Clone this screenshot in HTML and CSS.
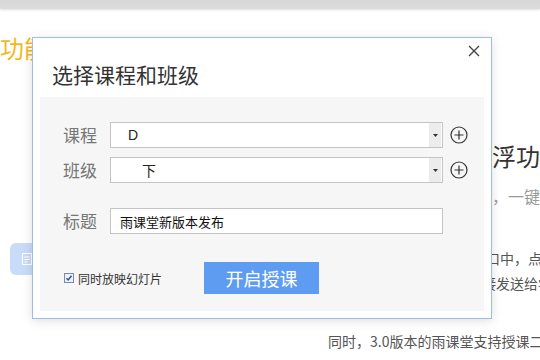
FILE: index.html
```html
<!DOCTYPE html>
<html lang="zh-CN">
<head>
<meta charset="utf-8">
<title>选择课程和班级</title>
<link rel="stylesheet" href="styles.css">
</head>
<body>
<div class="screen">
  <div class="topbar"></div>
  <div class="bg">
    <div class="bg-left">
      <h2 class="feature-title">新功能体验</h2>
      <div class="bg-btn">
        <svg width="10" height="12" viewBox="0 0 10 12"><rect x="0.5" y="0.5" width="9" height="11" fill="none" stroke="#fff" stroke-width="1"/><path d="M2.5 4h5M2.5 6.5h5M2.5 9h3" stroke="#fff" stroke-width="1"/></svg>
      </div>
    </div>
    <div class="bg-right">
      <h2 class="bg-heading">雨课堂全新推出悬浮功能</h2>
      <p class="bg-sub">不再需要来回切换课件窗口，一键开启授课</p>
      <p class="bg-para"><span class="bg-line bg-line-first">老师只要在雨课堂插件悬浮窗口中，点击开启授课</span><span class="bg-line">课程二维码和幻灯片都将会直接发送给学生</span></p>
      <p class="bg-para bg-para-indent">同时，3.0版本的雨课堂支持授课二维码</p>
    </div>
  </div>

  <div class="dialog">
    <div class="dlg-head">
      <h3 class="dlg-title">选择课程和班级</h3>
      <button class="dlg-close" type="button" aria-label="关闭">
        <svg width="12" height="12" viewBox="0 0 12 12"><path d="M1 1L11 11M11 1L1 11" stroke="#444" stroke-width="1.4" fill="none"/></svg>
      </button>
    </div>
    <div class="dlg-panel">
      <div class="row">
        <span class="row-label">课程</span>
        <div class="select">
          <span class="select-val">D</span>
          <span class="select-arrow"><svg width="5" height="3" viewBox="0 0 5 3"><path d="M0 0H5L2.5 3Z" fill="#333"/></svg></span>
        </div>
        <span class="add"><svg width="18" height="18" viewBox="0 0 18 18"><circle cx="9" cy="9" r="8" fill="none" stroke="#333" stroke-width="1.2"/><path d="M4.5 9H13.5M9 4.5V13.5" stroke="#333" stroke-width="1.2"/></svg></span>
      </div>
      <div class="row">
        <span class="row-label">班级</span>
        <div class="select">
          <span class="select-val select-val-indent">下</span>
          <span class="select-arrow"><svg width="5" height="3" viewBox="0 0 5 3"><path d="M0 0H5L2.5 3Z" fill="#333"/></svg></span>
        </div>
        <span class="add"><svg width="18" height="18" viewBox="0 0 18 18"><circle cx="9" cy="9" r="8" fill="none" stroke="#333" stroke-width="1.2"/><path d="M4.5 9H13.5M9 4.5V13.5" stroke="#333" stroke-width="1.2"/></svg></span>
      </div>
      <div class="row row-title">
        <span class="row-label">标题</span>
        <div class="text-input">雨课堂新版本发布</div>
      </div>
      <div class="row row-footer">
        <label class="check">
          <span class="check-box"><svg width="10" height="10" viewBox="0 0 10 10"><rect x="0.5" y="0.5" width="9" height="9" fill="#eef2f8" stroke="#7d8ba0"/><path d="M2.5 5.2L4.2 7L7.5 2.8" fill="none" stroke="#2a4ea8" stroke-width="1.4"/></svg></span>
          <span class="check-text">同时放映幻灯片</span>
        </label>
        <button class="start-btn" type="button">开启授课</button>
      </div>
    </div>
  </div>
</div>
</body>
</html>
```

FILE: styles.css
```css
html, body {
  margin: 0;
  padding: 0;
}
body {
  width: 540px;
  height: 360px;
  overflow: hidden;
  background: #fff;
  font-family: "Noto Sans CJK SC", "Noto Sans", sans-serif;
}
.screen {
  position: relative;
  width: 540px;
  height: 360px;
  overflow: hidden;
}
.topbar {
  height: 9px;
  background: linear-gradient(#d6d6d6, #dcdcdc);
  box-shadow: 0 1px 2px rgba(0, 0, 0, 0.12);
}
.bg {
  display: flex;
  white-space: nowrap;
}
.bg-left {
  flex: none;
  width: 324px;
  margin-left: -24px;
}
.feature-title {
  margin: 23px 0 0;
  font-size: 24px;
  line-height: 32px;
  font-weight: normal;
  color: #f4b818;
}
.bg-btn {
  margin: 179px 0 0 34px;
  width: 60px;
  height: 32px;
  border-radius: 6px;
  background: #c8dbf8;
  display: flex;
  align-items: center;
  padding-left: 12px;
  box-sizing: border-box;
}
.bg-right {
  flex: none;
}
.bg-heading {
  margin: 131px 0 0;
  font-size: 24px;
  line-height: 32px;
  font-weight: normal;
  color: #333;
}
.bg-sub {
  margin: 12px 0 0;
  font-size: 16px;
  line-height: 24px;
  color: #999;
}
.bg-para {
  margin: 38px 0 0;
  font-size: 14px;
  line-height: 25px;
  color: #555;
}
.bg-line {
  display: block;
}
.bg-line-first {
  padding-left: 4px;
}
.bg-para-indent {
  margin-top: 33px;
  text-indent: 28px;
}

.dialog {
  position: absolute;
  left: 32px;
  top: 37px;
  width: 460px;
  height: 282px;
  box-sizing: border-box;
  border: 1px solid #9fbbe6;
  background: #fff;
  box-shadow: 0 2px 10px rgba(0, 0, 0, 0.13);
  display: flex;
  flex-direction: column;
}
.dlg-head {
  height: 59px;
  box-sizing: border-box;
  padding: 25px 0 0 19px;
  flex: none;
}
.dlg-title {
  margin: 0;
  font-size: 21px;
  line-height: 22px;
  font-weight: normal;
  color: #333;
}
.dlg-close {
  position: absolute;
  top: 6px;
  right: 11px;
  width: 12px;
  height: 14px;
  padding: 0;
  border: 0;
  background: none;
  display: flex;
  align-items: center;
}
.dlg-panel {
  flex: 1;
  margin: 0 7px 7px;
  background: #f6f6f6;
  padding: 25px 0 0 23px;
  box-sizing: border-box;
}
.row {
  display: flex;
  align-items: center;
  height: 26px;
}
.row + .row {
  margin-top: 9px;
}
.row.row-title {
  margin-top: 25px;
}
.row.row-footer {
  margin-top: 28px;
  height: 32px;
}
.row-label {
  width: 47px;
  flex: none;
  font-size: 17px;
  color: #777;
  line-height: 26px;
}
.select, .text-input {
  width: 333px;
  height: 26px;
  box-sizing: border-box;
  border: 1px solid #c4c4c4;
  background: #fff;
  display: flex;
  align-items: center;
}
.select-val {
  flex: 1;
  padding-left: 17px;
  font-family: "Liberation Sans", "Noto Sans CJK SC", sans-serif;
  font-size: 14px;
  color: #222;
}
.select-val-indent {
  padding-left: 31px;
}
.select-arrow {
  flex: none;
  align-self: stretch;
  width: 12px;
  margin-right: 1px;
  background: #ececec;
  display: flex;
  align-items: center;
  justify-content: center;
}
.add {
  margin-left: 7px;
  width: 18px;
  height: 18px;
  display: flex;
}
.text-input {
  padding-left: 9px;
  font-size: 13px;
  color: #111;
}
.check {
  width: 141px;
  flex: none;
  display: flex;
  align-items: center;
  gap: 4px;
  padding-left: 1px;
  box-sizing: border-box;
}
.check-box {
  display: flex;
  width: 10px;
  height: 10px;
}
.check-text {
  font-size: 12px;
  color: #333;
}
.start-btn {
  width: 115px;
  height: 32px;
  border: 0;
  padding: 0;
  background: #5e9cf1;
  color: #fff;
  font-family: "Noto Sans CJK SC", sans-serif;
  font-size: 18px;
}
```
